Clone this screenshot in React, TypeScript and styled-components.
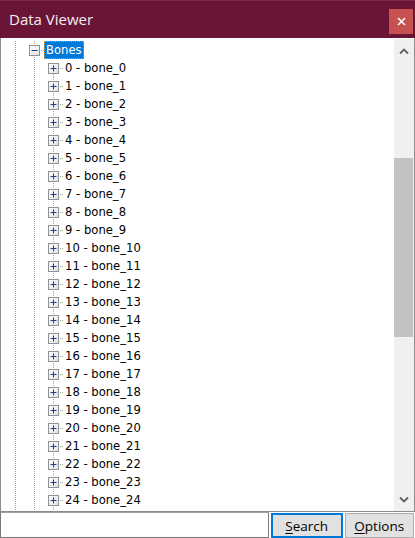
import React from "react";
import styled, { createGlobalStyle, css } from "styled-components";

const Global = createGlobalStyle`
  html, body { margin: 0; padding: 0; background: #ffffff; }
  #root { width: 415px; height: 538px; }
  * { box-sizing: border-box; }
`;

const Window = styled.div`
  width: 415px;
  height: 538px;
  display: flex;
  flex-direction: column;
  background: #ffffff;
  overflow: hidden;
`;

const TitleBar = styled.div`
  height: 38px;
  flex: 0 0 38px;
  background: #6a1536;
  border-top: 1px solid #7a2a48;
  display: flex;
  align-items: center;
  justify-content: space-between;
  padding: 0 2px 0 9px;
`;

const Title = styled.div`
  font-family: "Segoe UI", "Open Sans", "Noto Sans", sans-serif;
  font-size: 15px;
  color: #f4eef1;
  margin-top: -2px;
`;

const CloseButton = styled.button`
  width: 24px;
  height: 25px;
  margin-top: 4px;
  border: none;
  padding: 0;
  background: #c75050;
  color: #ffffff;
  display: flex;
  align-items: center;
  justify-content: center;
`;

const Body = styled.div`
  flex: 1;
  display: flex;
  border-left: 1px solid #8c8c8c;
  border-right: 1px solid #8c8c8c;
  min-height: 0;
`;

const Tree = styled.div`
  flex: 1;
  overflow: hidden;
  padding: 3px 0 0 5px;
  font-family: "DejaVu Sans", Verdana, sans-serif;
  font-size: 11.6px;
  color: #000000;
`;

const Row = styled.div`
  height: 18px;
  display: flex;
  align-items: stretch;
`;

const dotsV = css`
  background-image: linear-gradient(to bottom, #a0a0a0 50%, transparent 50%);
  background-size: 1px 2px;
  width: 1px;
`;

const dotsH = css`
  background-image: linear-gradient(to right, #a0a0a0 50%, transparent 50%);
  background-size: 2px 1px;
  height: 1px;
`;

const Guide = styled.div`
  width: 19px;
  flex: 0 0 19px;
  position: relative;
  &::before {
    content: "";
    position: absolute;
    left: 9px;
    top: 0;
    bottom: 0;
    ${dotsV}
  }
`;

const Connector = styled.div<{ $first?: boolean }>`
  width: 19px;
  flex: 0 0 19px;
  position: relative;
  &::before {
    content: "";
    position: absolute;
    left: 9px;
    top: ${(p) => (p.$first ? "9px" : "0")};
    bottom: 0;
    ${dotsV}
  }
  &::after {
    content: "";
    position: absolute;
    left: 10px;
    right: 0;
    top: 9px;
    ${dotsH}
  }
`;

const Expander = styled.svg`
  position: absolute;
  left: 4px;
  top: 4px;
  width: 11px;
  height: 11px;
  z-index: 1;
  display: block;
`;

const Label = styled.span<{ $selected?: boolean }>`
  height: 18px;
  line-height: 16px;
  padding: 0 1px 0 1px;
  border: 1px dotted transparent;
  white-space: nowrap;
  ${(p) =>
    p.$selected &&
    css`
      background: #0078d7;
      color: #ffffff;
      border-color: #e8912e;
    `}
`;

const ScrollBar = styled.div`
  width: 20px;
  flex: 0 0 20px;
  background: #f0f0f0;
  display: flex;
  flex-direction: column;
  margin-top: 1px;
`;

const ArrowButton = styled.div`
  height: 24px;
  flex: 0 0 24px;
  display: flex;
  align-items: center;
  justify-content: center;
`;

const Track = styled.div`
  flex: 1;
  display: flex;
  flex-direction: column;
  padding-top: 95px;
`;

const Thumb = styled.div`
  height: 179px;
  margin-right: 1px;
  background: #c2c2c2;
`;

const BottomBar = styled.div`
  height: 27px;
  flex: 0 0 27px;
  display: flex;
  align-items: stretch;
  gap: 2px;
  padding-right: 1px;
  border-top: 1px solid #8c8c8c;
`;

const SearchInput = styled.input`
  width: 269px;
  flex: 0 0 269px;
  border: 1px solid #7a7a7a;
  border-top-color: #a0a0a0;
  margin: 0;
  outline: none;
  background: #ffffff;
`;

const Button = styled.button<{ $focused?: boolean }>`
  flex: 1;
  margin: 1px 0 0 0;
  padding: 0;
  background: #e1e1e1;
  border: ${(p) => (p.$focused ? "2px solid #0078d7" : "1px solid #adadad")};
  font-family: "Segoe UI", "Open Sans", "Noto Sans", sans-serif;
  font-size: 13.5px;
  color: #000000;
  line-height: 20px;
  u { text-decoration: underline; text-underline-offset: 2px; }
`;

const Box: React.FC<{ open?: boolean }> = ({ open }) => (
  <Expander viewBox="0 0 11 11">
    <defs>
      <linearGradient id={open ? "gm" : "gp"} x1="0" y1="0" x2="1" y2="1">
        <stop offset="0" stopColor="#ffffff" />
        <stop offset="1" stopColor="#e2e2e2" />
      </linearGradient>
    </defs>
    <rect x="0.5" y="0.5" width="10" height="10" fill={`url(#${open ? "gm" : "gp"})`} stroke="#919191" />
    <path d={open ? "M2.5 5.5H8.5" : "M2.5 5.5H8.5M5.5 2.5V8.5"} stroke="#1f3f96" strokeWidth="1" />
  </Expander>
);

const Chevron: React.FC<{ down?: boolean }> = ({ down }) => (
  <svg width="10" height="7" viewBox="0 0 10 7">
    <path
      d={down ? "M1 1.5L5 5.5L9 1.5" : "M1 5.5L5 1.5L9 5.5"}
      fill="none"
      stroke="#606060"
      strokeWidth="1.8"
    />
  </svg>
);

const bones = Array.from({ length: 25 }, (_, i) => i);

export default function App() {
  return (
    <>
      <Global />
      <Window>
        <TitleBar>
          <Title>Data Viewer</Title>
          <CloseButton aria-label="Close">
            <svg width="9" height="9" viewBox="0 0 9 9">
              <path d="M1 1L8 8M8 1L1 8" stroke="#ffffff" strokeWidth="1.6" />
            </svg>
          </CloseButton>
        </TitleBar>
        <Body>
          <Tree>
            <Row>
              <Guide />
              <Connector>
                <Box open />
              </Connector>
              <Label $selected>Bones</Label>
            </Row>
            {bones.map((i) => (
              <Row key={i}>
                <Guide />
                <Guide />
                <Connector $first={i === 0}>
                  <Box />
                </Connector>
                <Label>{`${i} - bone_${i}`}</Label>
              </Row>
            ))}
            <Row>
              <Guide />
              <Guide />
              <Guide />
            </Row>
          </Tree>
          <ScrollBar>
            <ArrowButton>
              <Chevron />
            </ArrowButton>
            <Track>
              <Thumb />
            </Track>
            <ArrowButton>
              <Chevron down />
            </ArrowButton>
          </ScrollBar>
        </Body>
        <BottomBar>
          <SearchInput />
          <Button $focused>
            <u>S</u>earch
          </Button>
          <Button>
            <u>O</u>ptions
          </Button>
        </BottomBar>
      </Window>
    </>
  );
}
